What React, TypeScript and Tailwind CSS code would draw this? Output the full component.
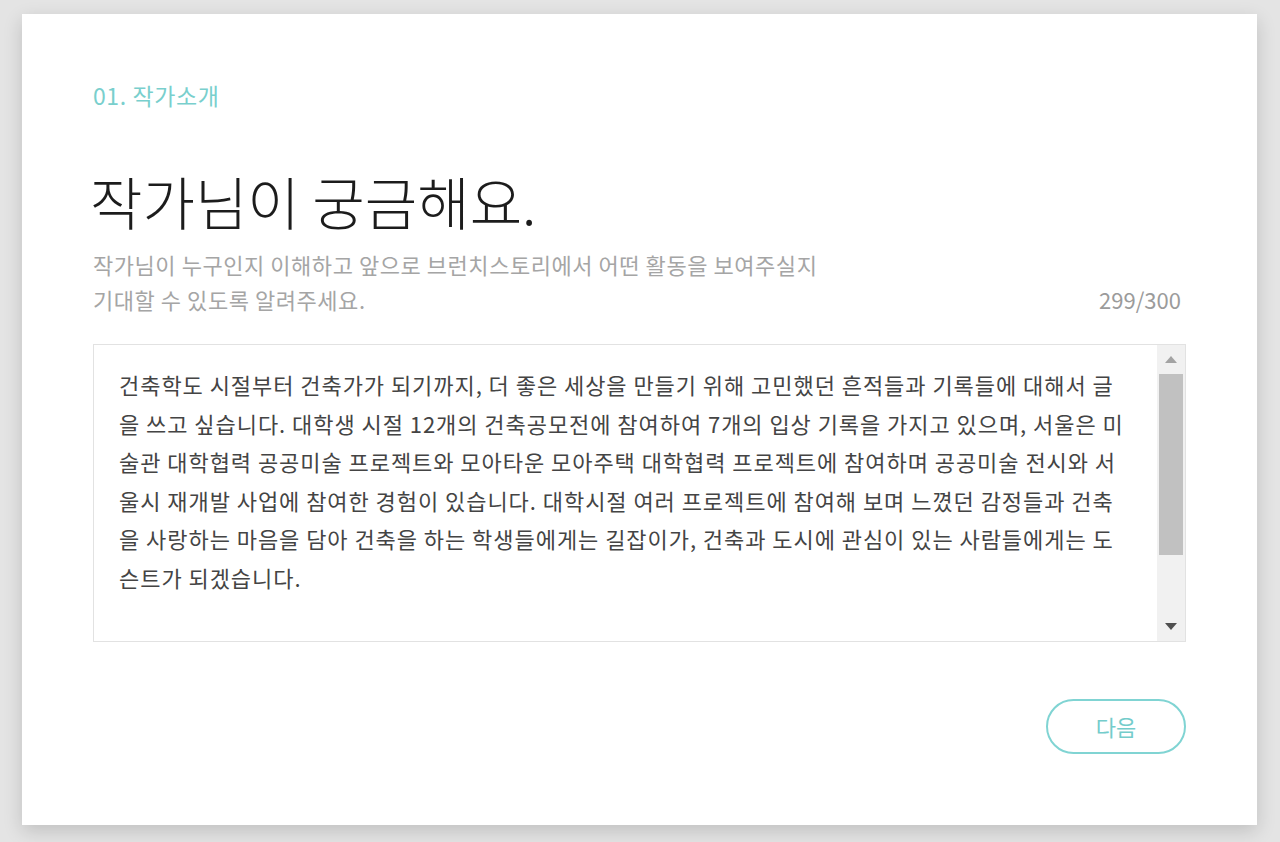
import React from "react";

const BODY_LINES = [
  "건축학도 시절부터 건축가가 되기까지, 더 좋은 세상을 만들기 위해 고민했던 흔적들과 기록들에 대해서 글",
  "을 쓰고 싶습니다. 대학생 시절 12개의 건축공모전에 참여하여 7개의 입상 기록을 가지고 있으며, 서울은 미",
  "술관 대학협력 공공미술 프로젝트와 모아타운 모아주택 대학협력 프로젝트에 참여하며 공공미술 전시와 서",
  "울시 재개발 사업에 참여한 경험이 있습니다. 대학시절 여러 프로젝트에 참여해 보며 느꼈던 감정들과 건축",
  "을 사랑하는 마음을 담아 건축을 하는 학생들에게는 길잡이가, 건축과 도시에 관심이 있는 사람들에게는 도",
  "슨트가 되겠습니다.",
];

const FONT = "font-['Noto_Sans_CJK_KR','Noto_Sans',sans-serif]";

function ScrollTrack() {
  return (
    <div className="flex w-[28px] flex-none flex-col items-center bg-[#f1f1f1]">
      <div className="flex h-[29px] w-full items-center justify-center">
        <svg width="12" height="7" viewBox="0 0 12 7" aria-hidden="true">
          <path d="M6 0L12 7H0z" fill="#a3a3a3" />
        </svg>
      </div>
      <div className="h-[181px] w-[24px] bg-[#c1c1c1]" />
      <div className="flex-1" />
      <div className="flex h-[29px] w-full items-center justify-center">
        <svg width="12" height="7" viewBox="0 0 12 7" aria-hidden="true">
          <path d="M0 0h12L6 7z" fill="#505050" />
        </svg>
      </div>
    </div>
  );
}

export default function App() {
  return (
    <div className={`min-h-screen bg-[#e4e4e4] pt-[14px] pl-[22px] ${FONT}`}>
      <div className="flex w-[1235px] flex-col bg-white px-[71px] pt-[69px] pb-[71px] shadow-[0_6px_18px_rgba(0,0,0,0.16)]">
        <div className="text-[23px] leading-[24px] tracking-[0.6px] text-[#79cfcd]">01. 작가소개</div>

        <h1 className="mt-[61px] -ml-[3px] text-[57px] leading-[64px] font-light text-[#1c1c1c]">
          작가님이 궁금해요.
        </h1>

        <div className="mt-[15px] flex items-end justify-between">
          <p className="text-[22px] leading-[35px] tracking-[0.55px] text-[#a5a5a5]">
            작가님이 누구인지 이해하고 앞으로 브런치스토리에서 어떤 활동을 보여주실지
            <br />
            기대할 수 있도록 알려주세요.
          </p>
          <span className="pr-[5px] text-[22px] leading-[35px] text-[#9b9b9b]">299/300</span>
        </div>

        <div className="mt-[27px] flex h-[298px] border border-[#e2e2e2]">
          <div className="flex-1 pt-[20px] pl-[25px] text-[22px] leading-[38.6px] tracking-[0.95px] text-[#444]">
            {BODY_LINES.map((line) => (
              <div key={line} className="whitespace-nowrap">
                {line}
              </div>
            ))}
          </div>
          <ScrollTrack />
        </div>

        <div className="mt-[57px] flex justify-end">
          <button
            type="button"
            className="flex h-[55px] w-[140px] items-center justify-center rounded-full border-2 border-[#80d4d3] text-[22px] text-[#74cccb]"
          >
            다음
          </button>
        </div>
      </div>
    </div>
  );
}
